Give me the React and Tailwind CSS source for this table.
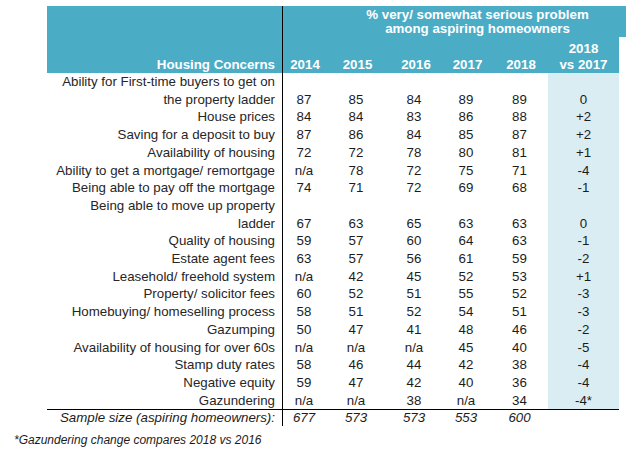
import React from "react";

const rows = [
  [["Ability for First-time buyers to get on", "the property ladder"], "87", "85", "84", "89", "89", "0"],
  [["House prices"], "84", "84", "83", "86", "88", "+2"],
  [["Saving for a deposit to buy"], "87", "86", "84", "85", "87", "+2"],
  [["Availability of housing"], "72", "72", "78", "80", "81", "+1"],
  [["Ability to get a mortgage/ remortgage"], "n/a", "78", "72", "75", "71", "-4"],
  [["Being able to pay off the mortgage"], "74", "71", "72", "69", "68", "-1"],
  [["Being able to move up property", "ladder"], "67", "63", "65", "63", "63", "0"],
  [["Quality of housing"], "59", "57", "60", "64", "63", "-1"],
  [["Estate agent fees"], "63", "57", "56", "61", "59", "-2"],
  [["Leasehold/ freehold system"], "n/a", "42", "45", "52", "53", "+1"],
  [["Property/ solicitor fees"], "60", "52", "51", "55", "52", "-3"],
  [["Homebuying/ homeselling process"], "58", "51", "52", "54", "51", "-3"],
  [["Gazumping"], "50", "47", "41", "48", "46", "-2"],
  [["Availability of housing for over 60s"], "n/a", "n/a", "n/a", "45", "40", "-5"],
  [["Stamp duty rates"], "58", "46", "44", "42", "38", "-4"],
  [["Negative equity"], "59", "47", "42", "40", "36", "-4"],
  [["Gazundering"], "n/a", "n/a", "38", "n/a", "34", "-4*"],
];

const widths = ["w-[42px]", "w-[62px]", "w-[54px]", "w-[50px]", "w-[57px]"];

export default function App() {
  return (
    <div
      className="w-[626px] h-[454px] bg-white text-[#1c1c1c] overflow-hidden"
      style={{ fontFamily: '"Liberation Sans", Arial, sans-serif' }}
    >
      <div className="pl-[47px] pt-[6px]">
        {/* Title row */}
        <div className="flex h-[31px] w-[579px] bg-[#4bacc6] text-white font-bold text-[13.3px] leading-[14px]">
          <div className="w-[235px] shrink-0" />
          <div className="border-l border-black flex-1 pl-[46px] pt-[2px] text-center">
            % very/ somewhat serious problem
            <br />
            among aspiring homeowners
          </div>
        </div>
        {/* Year header */}
        <div className="flex h-[36px] w-[572px] bg-[#4bacc6] text-white font-bold text-[13.3px]">
          <div className="w-[235px] shrink-0 flex flex-col justify-end items-end pr-[7px] leading-[16px]">
            Housing Concerns
          </div>
          <div className="border-l border-black flex items-end leading-[16px]">
            <div className={`${widths[0]} text-center pl-[2px]`}>2014</div>
            <div className={`${widths[1]} text-center pl-[3px]`}>2015</div>
            <div className={`${widths[2]} text-center pl-[4px]`}>2016</div>
            <div className={`${widths[3]} text-center pl-[3px]`}>2017</div>
            <div className={`${widths[4]} text-center pl-[3px]`}>2018</div>
            <div className="w-[71px] text-center pt-[3px]">
              <div className="leading-[17px]">2018</div>
              <div className="leading-[16px]">vs 2017</div>
            </div>
          </div>
        </div>
        {/* Body */}
        <div className="w-[572px] text-[13.3px] leading-[17.7px]">
          {rows.map((r, i) => (
            <div key={i} className="flex">
              <div className="w-[235px] shrink-0 text-right pr-[7px] text-[#262626] whitespace-nowrap">
                {r[0].map((l, j) => (
                  <div key={j}>{l}</div>
                ))}
              </div>
              <div className="border-l border-black flex items-end">
                {widths.map((w, k) => (
                  <div key={k} className={`${w} text-center`}>
                    {r[k + 1]}
                  </div>
                ))}
              </div>
              <div className="w-[71px] bg-[#daedf3] flex items-end justify-center">
                {r[6]}
              </div>
            </div>
          ))}
          {/* Sample size row */}
          <div className="flex border-t border-black italic text-[13.3px] leading-[16px]">
            <div className="w-[235px] shrink-0 text-right pr-[7px] whitespace-nowrap">
              Sample size (aspiring homeowners):
            </div>
            <div className="border-l border-black flex">
              <div className={`${widths[0]} text-center`}>677</div>
              <div className={`${widths[1]} text-center`}>573</div>
              <div className={`${widths[2]} text-center`}>573</div>
              <div className={`${widths[3]} text-center`}>553</div>
              <div className={`${widths[4]} text-center`}>600</div>
            </div>
          </div>
        </div>
      </div>
      <div className="pl-[14px] pt-[7px] italic text-[12px] leading-[14px] text-[#1c1c1c]">
        *Gazundering change compares 2018 vs 2016
      </div>
    </div>
  );
}
